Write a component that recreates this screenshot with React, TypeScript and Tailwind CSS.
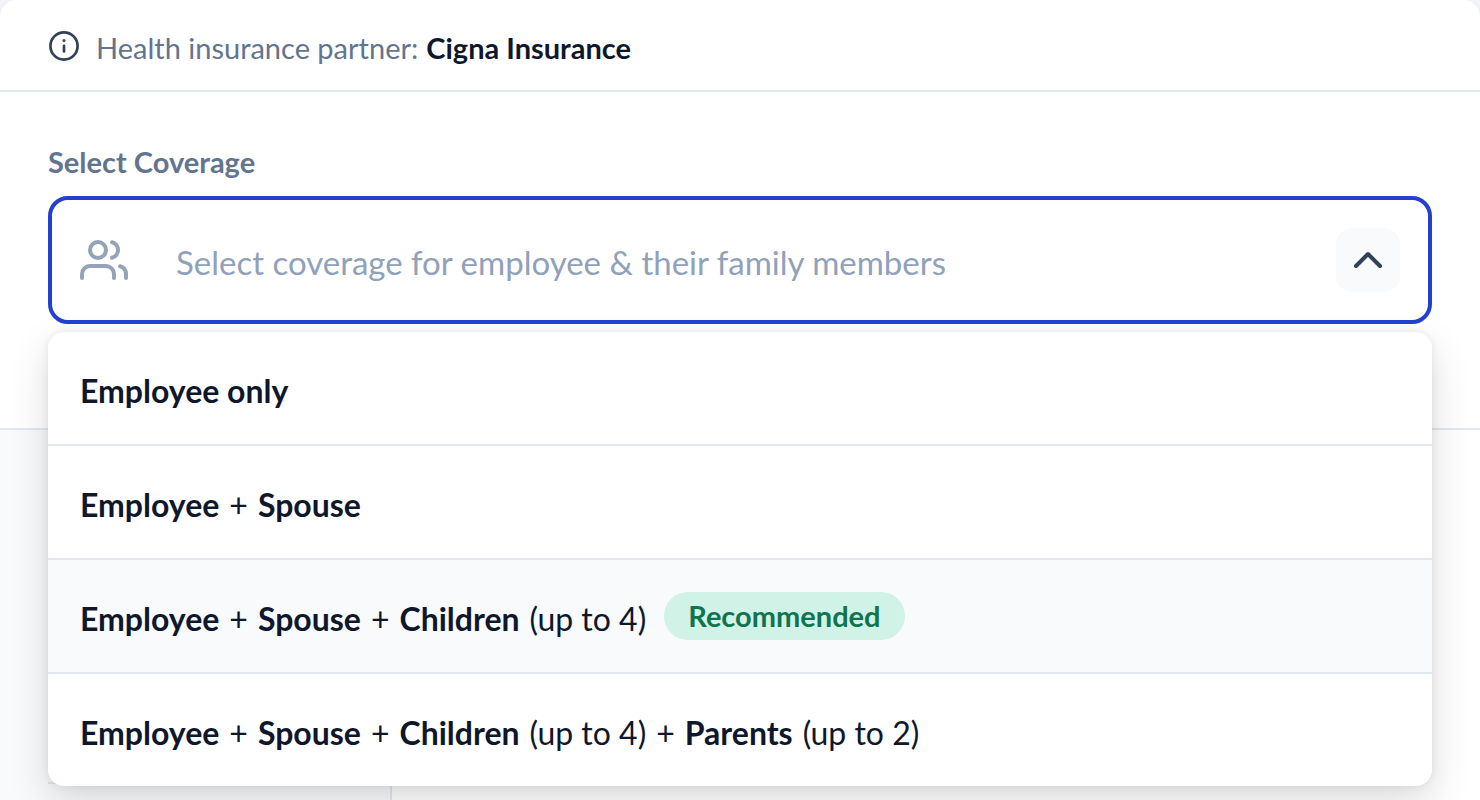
import { useState } from "react";

type Part = { text: string; strong?: boolean };
type Option = { id: string; parts: Part[]; recommended?: boolean };

const options: Option[] = [
  { id: "employee", parts: [{ text: "Employee only", strong: true }] },
  {
    id: "spouse",
    parts: [{ text: "Employee", strong: true }, { text: "+" }, { text: "Spouse", strong: true }],
  },
  {
    id: "children",
    recommended: true,
    parts: [
      { text: "Employee", strong: true },
      { text: "+" },
      { text: "Spouse", strong: true },
      { text: "+" },
      { text: "Children", strong: true },
      { text: "(up to 4)" },
    ],
  },
  {
    id: "parents",
    parts: [
      { text: "Employee", strong: true },
      { text: "+" },
      { text: "Spouse", strong: true },
      { text: "+" },
      { text: "Children", strong: true },
      { text: "(up to 4)" },
      { text: "+" },
      { text: "Parents", strong: true },
      { text: "(up to 2)" },
    ],
  },
];

function InfoIcon() {
  return (
    <svg className="size-8 shrink-0" viewBox="0 0 32 32" fill="none" stroke="#334155" strokeWidth="2.7" aria-hidden="true">
      <circle cx="16" cy="16" r="13.6" />
      <path d="M16 15.9v5.5" strokeLinecap="round" strokeWidth="2.7" />
      <circle cx="16" cy="10.6" r="1.5" fill="#334155" stroke="none" />
    </svg>
  );
}

function UsersIcon() {
  return (
    <svg
      className="h-10 w-12 shrink-0"
      viewBox="0 0 48 40"
      fill="none"
      stroke="#94a3b8"
      strokeWidth="4"
      strokeLinecap="round"
      strokeLinejoin="round"
      aria-hidden="true"
    >
      <circle cx="18" cy="10" r="8" />
      <path d="M2 38v-4a8 8 0 0 1 8-8h16a8 8 0 0 1 8 8v4" />
      <path d="M32 2.25a8 8 0 0 1 0 15.5" />
      <path d="M40 26.2a8 8 0 0 1 6 7.8v4" />
    </svg>
  );
}

function ChevronIcon({ open }: { open: boolean }) {
  return (
    <svg
      className={open ? "size-8" : "size-8 rotate-180"}
      viewBox="0 0 32 32"
      fill="none"
      stroke="#334155"
      strokeWidth="4"
      strokeLinecap="round"
      strokeLinejoin="round"
      aria-hidden="true"
    >
      <path d="M4 22 16 10l12 12" />
    </svg>
  );
}

export default function App() {
  const [open, setOpen] = useState(true);
  const [value, setValue] = useState("");

  return (
    <div className="min-h-screen bg-slate-100 font-['Lato','Noto_Sans',sans-serif] text-slate-900">
      <main className="flex min-h-screen flex-col overflow-hidden rounded-t-2xl bg-white shadow-sm">
        <header className="flex items-center gap-4 border-b-2 border-slate-200 px-12 pt-[30px] pb-7">
          <InfoIcon />
          <p className="flex gap-2 pt-1 text-[29px] leading-7 text-slate-500">
            <span>Health insurance partner:</span>
            <strong className="font-bold text-slate-900">Cigna Insurance</strong>
          </p>
        </header>

        <section className="border-b-2 border-slate-200 px-12 pt-[50px] pb-[104px]">
          <label htmlFor="coverage" className="block pb-[14px] text-[29px] leading-10 font-bold text-slate-500">
            Select Coverage
          </label>
          <div className="relative">
            <div className="flex h-32 items-center gap-12 rounded-[20px] border-4 border-[#2340d0] px-7">
              <UsersIcon />
              <input
                id="coverage"
                type="text"
                readOnly
                value={value}
                placeholder="Select coverage for employee & their family members"
                className="min-w-0 flex-1 bg-transparent pt-1 text-[33px] leading-10 outline-none placeholder:text-slate-400"
              />
              <button
                type="button"
                aria-label="Toggle coverage options"
                aria-expanded={open}
                onClick={() => setOpen(!open)}
                className="flex size-16 items-center justify-center rounded-2xl bg-slate-50"
              >
                <ChevronIcon open={open} />
              </button>
            </div>

            {open && (
              <ul className="absolute inset-x-0 top-full z-10 mt-2 divide-y-2 divide-slate-200 overflow-hidden rounded-2xl bg-white shadow-[0_16px_40px_rgba(0,0,0,0.14),0_0_8px_rgba(0,0,0,0.08)]">
                {options.map((option) => (
                  <li key={option.id}>
                    <button
                      type="button"
                      onClick={() => {
                        setValue(option.parts.map((part) => part.text).join(" "));
                        setOpen(false);
                      }}
                      className={
                        option.recommended
                          ? "flex h-28 w-full items-center gap-[18px] bg-slate-50 px-8 text-left"
                          : "flex h-28 w-full items-center gap-[18px] px-8 text-left"
                      }
                    >
                      <span className="flex gap-[10px] pt-[6px] text-[32px] leading-10">
                        {option.parts.map((part, index) =>
                          part.strong ? (
                            <strong key={index} className="font-bold">
                              {part.text}
                            </strong>
                          ) : (
                            <span key={index}>{part.text}</span>
                          ),
                        )}
                      </span>
                      {option.recommended && (
                        <span className="rounded-full bg-[#d1f2e6] px-6 pt-[2px] pb-[2px] text-[29px] leading-11 font-bold text-[#10744f]">
                          Recommended
                        </span>
                      )}
                    </button>
                  </li>
                ))}
              </ul>
            )}
          </div>
        </section>

        <div className="flex flex-1">
          <aside className="w-98 border-r-2 border-slate-200 bg-slate-50 pl-12">
            <div className="h-[354px] border-b-2 border-slate-200" />
          </aside>
          <div className="flex-1" />
        </div>
      </main>
    </div>
  );
}
